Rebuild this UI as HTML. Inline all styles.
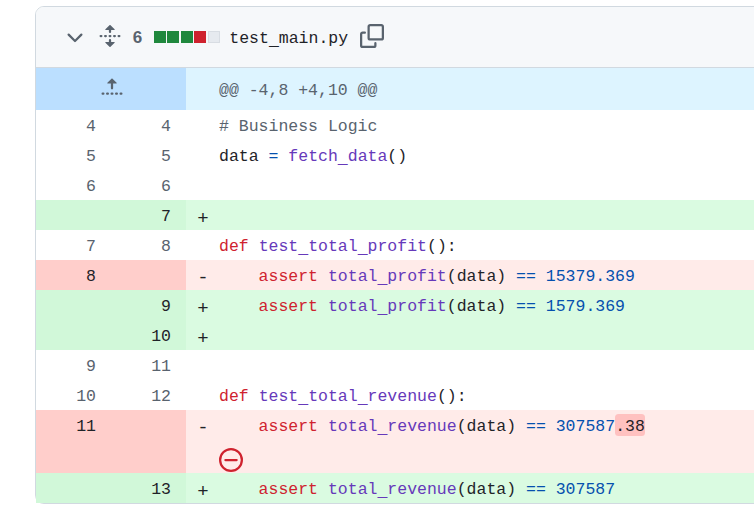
<!DOCTYPE html>
<html><head><meta charset="utf-8">
<style>
html,body{margin:0;padding:0;background:#fff;}
body{width:754px;height:519px;overflow:hidden;position:relative;font-family:"Liberation Mono",monospace;color:#1f2328;}
.card{position:absolute;left:35px;top:6px;width:760px;height:498px;border:1px solid #d1d9e0;border-radius:9px;box-sizing:border-box;background:#fff;}
.hdr{position:absolute;left:0;top:0;width:100%;height:60px;border-radius:8px 8px 0 0;background:#f6f8fa;border-bottom:1px solid #d1d9e0;}
.ic{position:absolute;width:24px;height:24px;fill:#59636e;}
.cnt{position:absolute;left:96.8px;top:19.8px;font:bold 17px/22px "Liberation Sans",sans-serif;color:#59636e;}
.blk{position:absolute;top:23.5px;width:12px;height:12px;}
.g{background:#1f883d}.r{background:#cf222e}.n{background:#e6eaef;box-shadow:inset 0 0 0 1px #d8dde3;}
.fname{position:absolute;left:193.3px;top:17.8px;font-size:16.5px;line-height:28px;color:#1f2328;white-space:pre;}
.row{position:absolute;left:0;width:100%;height:30px;}
.n1,.n2{position:absolute;top:0;height:100%;width:75px;box-sizing:border-box;padding-right:15px;text-align:right;font-size:16.5px;line-height:30px;color:#59636e;}
.n1{left:0}.n2{left:75px}
.n1,.n2{padding-top:2px}
.code{position:absolute;left:150px;top:0;right:0;height:100%;font-size:16.5px;line-height:30px;white-space:pre;}
.mk{position:absolute;left:11.2px;top:2.6px;font-size:19px;}
.tx{position:absolute;left:33px;top:2px;z-index:0;}
.add .n1,.add .n2{background:#d1f8d9;color:#1f2328}
.add .code{background:#dafbe1}
.del .n1,.del .n2{background:#ffcecb;color:#1f2328}
.del .code{background:#ffebe9}
.hunk .n1{width:150px;background:#bbdfff}
.hunk .code{background:#ddf4ff;color:#59636e;line-height:42px}
.k{color:#cf222e}.f{color:#6639ba}.c{color:#0550ae}.cm{color:#59636e}
.u{position:relative;top:2px}
.add .mk{top:4px}
.hl{position:absolute;left:396px;top:2px;width:29.8px;height:22px;background:#ffc1c0;border-radius:3.5px;z-index:-1;}
</style></head><body>
<div class="card">
 <div class="hdr">
  <svg class="ic" style="left:27px;top:18.5px" viewBox="0 0 16 16"><path d="M12.78 5.22a.749.749 0 0 1 0 1.06l-4.25 4.25a.749.749 0 0 1-1.06 0L3.22 6.28a.749.749 0 1 1 1.06-1.06L8 8.939l3.72-3.719a.749.749 0 0 1 1.06 0Z"/></svg>
  <svg class="ic" style="left:62px;top:17px" viewBox="0 0 16 16"><path d="m8.177.677 2.896 2.896a.25.25 0 0 1-.177.427H8.75v1.25a.75.75 0 0 1-1.5 0V4H5.104a.25.25 0 0 1-.177-.427L7.823.677a.25.25 0 0 1 .354 0ZM7.25 10.75a.75.75 0 0 1 1.5 0V12h2.146a.25.25 0 0 1 .177.427l-2.896 2.896a.25.25 0 0 1-.354 0l-2.896-2.896A.25.25 0 0 1 5.104 12H7.25v-1.25Zm-5-2a.75.75 0 0 0 0-1.5h-.5a.75.75 0 0 0 0 1.5h.5ZM6 8a.75.75 0 0 1-.75.75h-.5a.75.75 0 0 1 0-1.5h.5A.75.75 0 0 1 6 8Zm2.25.75a.75.75 0 0 0 0-1.5h-.5a.75.75 0 0 0 0 1.5h.5ZM12 8a.75.75 0 0 1-.75.75h-.5a.75.75 0 0 1 0-1.5h.5A.75.75 0 0 1 12 8Zm2.25.75a.75.75 0 0 0 0-1.5h-.5a.75.75 0 0 0 0 1.5h.5Z"/></svg>
  <div class="cnt">6</div>
  <div class="blk g" style="left:118px"></div><div class="blk g" style="left:131px"></div><div class="blk g" style="left:145px"></div><div class="blk r" style="left:158px"></div><div class="blk n" style="left:172px"></div>
  <div class="fname">test<span class="u">_</span>main.py</div>
  <svg class="ic" style="left:324px;top:17px" viewBox="0 0 16 16"><path d="M0 6.75C0 5.784.784 5 1.75 5h1.5a.75.75 0 0 1 0 1.5h-1.5a.25.25 0 0 0-.25.25v7.5c0 .138.112.25.25.25h7.5a.25.25 0 0 0 .25-.25v-1.5a.75.75 0 0 1 1.5 0v1.5A1.75 1.75 0 0 1 9.25 16h-7.5A1.75 1.75 0 0 1 0 14.25Z"/><path d="M5 1.75C5 .784 5.784 0 6.75 0h7.5C15.216 0 16 .784 16 1.75v7.5A1.75 1.75 0 0 1 14.25 11h-7.5A1.75 1.75 0 0 1 5 9.25Zm1.75-.25a.25.25 0 0 0-.25.25v7.5c0 .138.112.25.25.25h7.5a.25.25 0 0 0 .25-.25v-7.5a.25.25 0 0 0-.25-.25Z"/></svg>
 </div>

 <div class="row hunk" style="top:61px;height:42px">
  <div class="n1"></div>
  <svg class="ic" style="left:64px;top:8px" viewBox="0 0 16 16"><path d="M7.823 1.677 4.927 4.573A.25.25 0 0 0 5.104 5H7.25v3.236a.75.75 0 1 0 1.5 0V5h2.146a.25.25 0 0 0 .177-.427L8.177 1.677a.25.25 0 0 0-.354 0ZM13.75 11a.75.75 0 0 0 0 1.5h.5a.75.75 0 0 0 0-1.5h-.5Zm-3.75.75a.75.75 0 0 1 .75-.75h.5a.75.75 0 0 1 0 1.5h-.5a.75.75 0 0 1-.75-.75ZM7.75 11a.75.75 0 0 0 0 1.5h.5a.75.75 0 0 0 0-1.5h-.5ZM4 11.75a.75.75 0 0 1 .75-.75h.5a.75.75 0 0 1 0 1.5h-.5a.75.75 0 0 1-.75-.75ZM1.75 11a.75.75 0 0 0 0 1.5h.5a.75.75 0 0 0 0-1.5h-.5Z"/></svg>
  <div class="code"><span class="tx">@@ -4,8 +4,10 @@</span></div>
 </div>

 <div class="row" style="top:103px"><div class="n1">4</div><div class="n2">4</div><div class="code"><span class="tx"><span class="cm"># Business Logic</span></span></div></div>
 <div class="row" style="top:133px"><div class="n1">5</div><div class="n2">5</div><div class="code"><span class="tx">data <span class="c">=</span> <span class="f">fetch<span class="u">_</span>data</span>()</span></div></div>
 <div class="row" style="top:163px"><div class="n1">6</div><div class="n2">6</div><div class="code"></div></div>
 <div class="row add" style="top:193px"><div class="n1"></div><div class="n2">7</div><div class="code"><span class="mk">+</span></div></div>
 <div class="row" style="top:223px"><div class="n1">7</div><div class="n2">8</div><div class="code"><span class="tx"><span class="k">def</span> <span class="f">test<span class="u">_</span>total<span class="u">_</span>profit</span>():</span></div></div>
 <div class="row del" style="top:253px"><div class="n1">8</div><div class="n2"></div><div class="code"><span class="mk">-</span><span class="tx">    <span class="k">assert</span> <span class="f">total<span class="u">_</span>profit</span>(data) <span class="c">==</span> <span class="c">15379.369</span></span></div></div>
 <div class="row add" style="top:283px"><div class="n1"></div><div class="n2">9</div><div class="code"><span class="mk">+</span><span class="tx">    <span class="k">assert</span> <span class="f">total<span class="u">_</span>profit</span>(data) <span class="c">==</span> <span class="c">1579.369</span></span></div></div>
 <div class="row add" style="top:313px"><div class="n1"></div><div class="n2">10</div><div class="code"><span class="mk">+</span></div></div>
 <div class="row" style="top:343px"><div class="n1">9</div><div class="n2">11</div><div class="code"></div></div>
 <div class="row" style="top:373px"><div class="n1">10</div><div class="n2">12</div><div class="code"><span class="tx"><span class="k">def</span> <span class="f">test<span class="u">_</span>total<span class="u">_</span>revenue</span>():</span></div></div>
 <div class="row del" style="top:403px;height:63px"><div class="n1">11</div><div class="n2"></div><div class="code"><span class="mk">-</span><span class="tx">    <span class="k">assert</span> <span class="f">total<span class="u">_</span>revenue</span>(data) <span class="c">==</span> <span class="c">307587</span><span class="hl"></span>.38</span>
  <svg class="ic" style="left:33px;top:38px;fill:#cf222e" viewBox="0 0 16 16"><path d="M4.25 7.25a.75.75 0 0 0 0 1.5h7.5a.75.75 0 0 0 0-1.5h-7.5Z"/><path d="M16 8A8 8 0 1 1 0 8a8 8 0 0 1 16 0Zm-1.5 0a6.5 6.5 0 1 0-13 0 6.5 6.5 0 0 0 13 0Z"/></svg>
 </div></div>
 <div class="row add" style="top:466px"><div class="n1"></div><div class="n2">13</div><div class="code"><span class="mk">+</span><span class="tx">    <span class="k">assert</span> <span class="f">total<span class="u">_</span>revenue</span>(data) <span class="c">==</span> <span class="c">307587</span></span></div></div>
</div>
</body></html>
